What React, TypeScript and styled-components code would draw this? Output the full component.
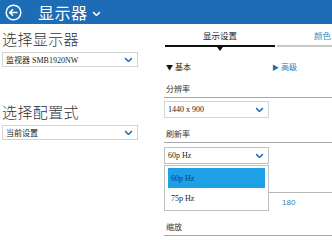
import React from 'react'
import styled, { createGlobalStyle } from 'styled-components'

const Global = createGlobalStyle`
  html, body {
    margin: 0;
    padding: 0;
    background: #fff;
  }
  body {
    width: 332px;
    height: 240px;
    overflow: hidden;
    font-family: "Noto Sans CJK SC", "Noto Sans", sans-serif;
  }
`

const Page = styled.div`
  width: 332px;
  height: 240px;
  overflow: hidden;
  display: flex;
  flex-direction: column;
`

const Header = styled.div`
  height: 24px;
  background-color: #1c6db6;
  color: #fff;
  display: flex;
  align-items: center;
  padding-left: 5px;
  flex-shrink: 0;
`

const Title = styled.div`
  font-size: 16px;
  line-height: 24px;
  margin-left: 16px;
  letter-spacing: 0.5px;
`

const HeaderCaret = styled.span`
  margin-left: 4px;
  margin-top: 3px;
  display: flex;
`

const Body = styled.div`
  flex: 1;
  display: flex;
  min-width: 0;
`

const Left = styled.div`
  width: 164px;
  flex-shrink: 0;
  padding: 5px 0 0 2px;
  box-sizing: border-box;
  display: flex;
  flex-direction: column;
`

const Heading = styled.div<{ $top?: number }>`
  font-size: 15px;
  line-height: 20px;
  color: #333;
  font-weight: 300;
  margin-top: ${(p) => p.$top || 0}px;
  letter-spacing: 0.4px;
`

const Select = styled.div<{ $width: number; $height: number; $top: number; $open?: boolean }>`
  width: ${(p) => p.$width}px;
  height: ${(p) => p.$height}px;
  box-sizing: border-box;
  border: 1px solid ${(p) => (p.$open ? '#b9c3c8' : '#d4d4d4')};
  display: flex;
  align-items: center;
  justify-content: space-between;
  padding: 0 4px 0 3px;
  margin-top: ${(p) => p.$top}px;
  background: #fff;
  flex-shrink: 0;
`

const SelectText = styled.span`
  font-family: "Liberation Serif", "Noto Sans CJK SC", serif;
  font-size: 8px;
  color: #222;
  white-space: nowrap;
`

const Right = styled.div`
  flex: 1;
  min-width: 0;
  display: flex;
  flex-direction: column;
`

const Tabs = styled.div`
  display: flex;
  height: 23px;
  padding-left: 1px;
  flex-shrink: 0;
`

const Tab = styled.div<{ $active?: boolean }>`
  position: relative;
  display: flex;
  justify-content: ${(p) => (p.$active ? 'center' : 'flex-start')};
  padding-top: 6px;
  padding-left: ${(p) => (p.$active ? 0 : 37)}px;
  box-sizing: border-box;
  font-size: 8.5px;
  line-height: 10px;
  color: ${(p) => (p.$active ? '#222' : '#3a8ab5')};
  border-bottom: 2px solid ${(p) => (p.$active ? '#111' : '#c8c8c8')};
  width: ${(p) => (p.$active ? '110px' : 'auto')};
  flex: ${(p) => (p.$active ? '0 0 auto' : '1')};
  margin-right: ${(p) => (p.$active ? 2 : 0)}px;
  white-space: nowrap;
`

const TabPointer = styled.div`
  position: absolute;
  bottom: -6px;
  left: 50%;
  margin-left: -3px;
  width: 0;
  height: 0;
  border-left: 3px solid transparent;
  border-right: 3px solid transparent;
  border-top: 4px solid #111;
`

const Toggles = styled.div`
  display: flex;
  margin-top: 15px;
  font-size: 8px;
  line-height: 10px;
  padding-left: 2px;
`

const Toggle = styled.div<{ $blue?: boolean; $width?: number }>`
  width: ${(p) => (p.$width ? `${p.$width}px` : 'auto')};
  color: ${(p) => (p.$blue ? '#2a7ec0' : '#222')};
  display: flex;
  align-items: center;
  gap: 2px;
`

const Arrow = styled.span<{ $blue?: boolean }>`
  font-size: 7px;
  color: ${(p) => (p.$blue ? '#1c6db6' : '#111')};
`

const Field = styled.div<{ $top: number }>`
  margin-top: ${(p) => p.$top}px;
  display: flex;
  flex-direction: column;
  position: relative;
`

const FieldLabel = styled.div`
  font-size: 8px;
  line-height: 10px;
  color: #333;
  padding: 0 0 3px 2px;
  border-bottom: 1px solid #a8a8a8;
`

const OptionList = styled.div`
  position: absolute;
  top: 36px;
  left: 0;
  width: 105px;
  box-sizing: border-box;
  border: 1px solid #b9c3c8;
  background: #fff;
  padding: 2px 3px;
  z-index: 2;
`

const Option = styled.div<{ $selected?: boolean }>`
  height: 20px;
  display: flex;
  align-items: center;
  padding-left: 3px;
  background: ${(p) => (p.$selected ? '#1ea0e6' : 'transparent')};
  font-family: "Liberation Serif", serif;
  font-size: 8px;
  color: ${(p) => (p.$selected ? '#0e3a6a' : '#222')};
`

const SliderRow = styled.div`
  margin-top: 28px;
  border-top: 1px solid #b8b8b8;
  padding-top: 5px;
  padding-left: 118px;
  font-size: 8px;
  line-height: 10px;
  color: #3a7fb3;
  font-family: "Liberation Sans", sans-serif;
`

const Chevron = ({ size = 9, color = '#1c6db6' }: { size?: number; color?: string }) => (
  <svg width={size} height={size * 0.66} viewBox="0 0 12 8">
    <path d="M1.5 1.5 L6 6 L10.5 1.5" fill="none" stroke={color} strokeWidth="2" />
  </svg>
)

const BackIcon = () => (
  <svg width="17" height="17" viewBox="0 0 17 17">
    <circle cx="8.5" cy="8.5" r="7.3" fill="none" stroke="#fff" strokeWidth="1.5" />
    <path d="M12.5 8.5 H5 M8 5.3 L4.8 8.5 L8 11.7" fill="none" stroke="#fff" strokeWidth="1.6" />
  </svg>
)

export default function App() {
  return (
    <Page>
      <Global />
      <Header>
        <BackIcon />
        <Title>显示器</Title>
        <HeaderCaret>
          <Chevron size={9} color="#fff" />
        </HeaderCaret>
      </Header>
      <Body>
        <Left>
          <Heading>选择显示器</Heading>
          <Select $width={136} $height={15} $top={3}>
            <SelectText>监视器 SMB1920NW</SelectText>
            <Chevron />
          </Select>
          <Heading $top={35}>选择配置式</Heading>
          <Select $width={136} $height={15} $top={3}>
            <SelectText>当前设置</SelectText>
            <Chevron />
          </Select>
        </Left>
        <Right>
          <Tabs>
            <Tab $active>
              显示设置
              <TabPointer />
            </Tab>
            <Tab>颜色</Tab>
          </Tabs>
          <Toggles>
            <Toggle $width={106}>
              <Arrow>▼</Arrow>基本
            </Toggle>
            <Toggle $blue>
              <Arrow $blue>▶</Arrow>高级
            </Toggle>
          </Toggles>
          <Field $top={12}>
            <FieldLabel>分辨率</FieldLabel>
            <Select $width={105} $height={17} $top={3}>
              <SelectText>1440 x 900</SelectText>
              <Chevron />
            </Select>
          </Field>
          <Field $top={11}>
            <FieldLabel>刷新率</FieldLabel>
            <Select $width={105} $height={17} $top={4} $open>
              <SelectText>60p Hz</SelectText>
              <Chevron />
            </Select>
            <OptionList>
              <Option $selected>60p Hz</Option>
              <Option>75p Hz</Option>
            </OptionList>
            <SliderRow>180</SliderRow>
          </Field>
          <Field $top={14}>
            <FieldLabel>缩放</FieldLabel>
          </Field>
        </Right>
      </Body>
    </Page>
  )
}
